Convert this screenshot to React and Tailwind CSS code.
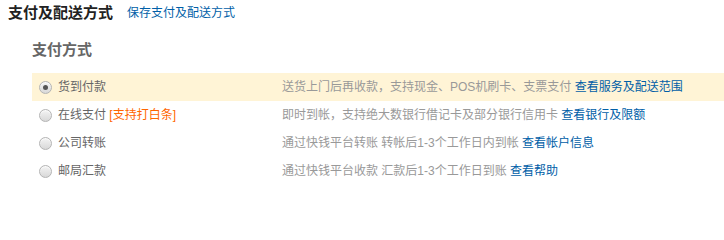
import React from "react";

const font = { fontFamily: '"Liberation Sans", "Noto Sans CJK SC", sans-serif' };

function Radio({ checked }) {
  return (
    <span className="relative flex h-[13px] w-[13px] shrink-0 items-center justify-center rounded-full border border-[#b4b4b4] bg-gradient-to-b from-[#f4f4f4] to-[#d8d8d8] shadow-[inset_0_1px_1px_rgba(255,255,255,0.8)]">
      {checked && <span className="h-[5px] w-[5px] rounded-full bg-[#555]" />}
    </span>
  );
}

const rows = [
  {
    label: "货到付款",
    desc: "送货上门后再收款，支持现金、POS机刷卡、支票支付",
    link: "查看服务及配送范围",
    checked: true,
  },
  {
    label: "在线支付",
    extra: "[支持打白条]",
    desc: "即时到帐，支持绝大数银行借记卡及部分银行信用卡",
    link: "查看银行及限额",
  },
  {
    label: "公司转账",
    desc: "通过快钱平台转账 转帐后1-3个工作日内到帐",
    link: "查看帐户信息",
  },
  {
    label: "邮局汇款",
    desc: "通过快钱平台收款 汇款后1-3个工作日到账",
    link: "查看帮助",
  },
];

export default function App() {
  return (
    <div className="h-[206px] w-[724px] bg-white pl-2 pt-[4px]" style={font}>
      <div className="flex h-[18px] items-center gap-[14px]">
        <span className="text-[15px] font-bold leading-[18px] text-[#222]">支付及配送方式</span>
        <a className="text-[12px] leading-[18px] text-[#005ea7]">保存支付及配送方式</a>
      </div>
      <div className="ml-6 mt-[19px] text-[15px] font-bold leading-[18px] text-[#666]">支付方式</div>
      <div className="ml-6 mt-[14px] flex flex-col">
        {rows.map((r) => (
          <div
            key={r.label}
            className={
              "flex h-[28px] items-center text-[12px] " +
              (r.checked ? "bg-[#fff4d6]" : "")
            }
          >
            <div className="flex w-[250px] shrink-0 items-center gap-[6px] pl-[7px]">
              <Radio checked={r.checked} />
              <span className="text-[#666]">
                {r.label}
                {r.extra && <span className="text-[#ff6600]"> {r.extra}</span>}
              </span>
            </div>
            <div className="whitespace-nowrap text-[#999]">
              {r.desc} <a className="text-[#005ea7]">{r.link}</a>
            </div>
          </div>
        ))}
      </div>
    </div>
  );
}
